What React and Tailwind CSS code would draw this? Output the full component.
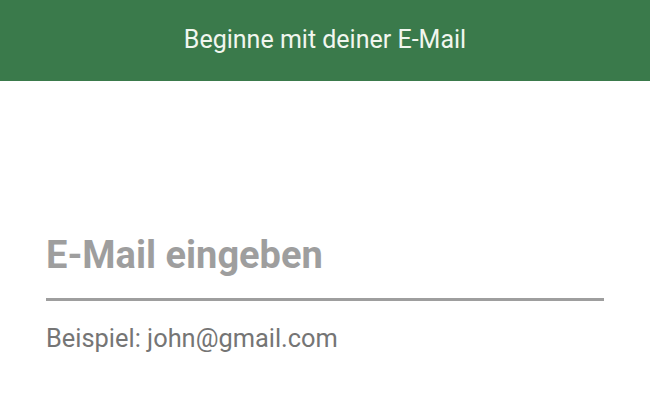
export default function App() {
  return (
    <div className="min-h-[419px] w-full bg-white font-['Roboto',sans-serif]">
      {/* header */}
      <div className="flex h-[81px] items-center justify-center bg-[#3a7a4b] pb-[3px]">
        <h1 className="text-[25px] leading-none text-[#f1f6ef]">Beginne mit deiner E-Mail</h1>
      </div>

      <div className="px-[46px] pt-[155px]">
        <div className="border-b-[3px] border-[#9e9e9e] pb-[24px]">
          <div className="text-[38px] font-bold leading-none text-[#9e9e9e]">E-Mail eingeben</div>
        </div>
        <p className="mt-[25px] text-[25.4px] leading-none text-[#757575]">Beispiel: john@gmail.com</p>
      </div>
    </div>
  );
}
